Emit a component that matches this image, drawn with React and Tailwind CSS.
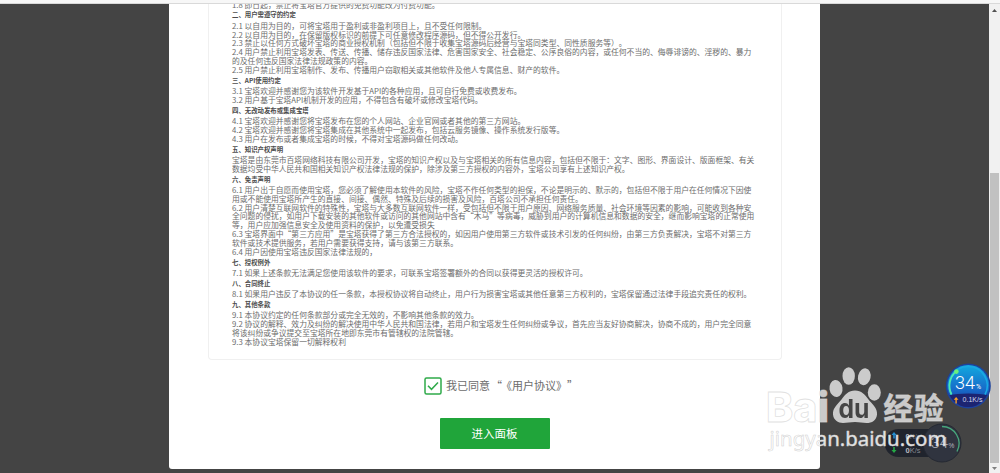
const sections = [
  {
    title: '二、用户需遵守的约定',
    lines: [
      '2.1 以自用为目的，可将宝塔用于盈利或非盈利项目上，且不受任何限制。',
      '2.2 以自用为目的，在保留版权标识的前提下可任意修改程序源码，但不得公开发行。',
      '2.3 禁止以任何方式破坏宝塔的商业授权机制（包括但不限于收集宝塔源码后经营与宝塔同类型、同性质服务等）。',
      '2.4 用户禁止利用宝塔发表、传送、传播、储存违反国家法律、危害国家安全、社会稳定、公序良俗的内容，或任何不当的、侮辱诽谤的、淫秽的、暴力',
      '的及任何违反国家法律法规政策的内容。',
      '2.5 用户禁止利用宝塔制作、发布、传播用户窃取相关或其他软件及他人专属信息、财产的软件。',
    ],
  },
  {
    title: '三、API使用约定',
    lines: [
      '3.1 宝塔欢迎并感谢您为该软件开发基于API的各种应用，且可自行免费或收费发布。',
      '3.2 用户基于宝塔API机制开发的应用，不得包含有破坏或修改宝塔代码。',
    ],
  },
  {
    title: '四、无改动发布或集成宝塔',
    lines: [
      '4.1 宝塔欢迎并感谢您将宝塔发布在您的个人网站、企业官网或者其他的第三方网站。',
      '4.2 宝塔欢迎并感谢您将宝塔集成在其他系统中一起发布，包括云服务镜像、操作系统发行版等。',
      '4.3 用户在发布或者集成宝塔的时候，不得对宝塔源码做任何改动。',
    ],
  },
  {
    title: '五、知识产权声明',
    lines: [
      '宝塔是由东莞市百塔网络科技有限公司开发，宝塔的知识产权以及与宝塔相关的所有信息内容，包括但不限于：文字、图形、界面设计、版面框架、有关',
      '数据均受中华人民共和国相关知识产权法律法规的保护，除涉及第三方授权的内容外，宝塔公司享有上述知识产权。',
    ],
  },
  {
    title: '六、免责声明',
    lines: [
      '6.1 用户出于自愿而使用宝塔，您必须了解使用本软件的风险，宝塔不作任何类型的担保，不论是明示的、默示的，包括但不限于用户在任何情况下因使',
      '用或不能使用宝塔所产生的直接、间接、偶然、特殊及后续的损害及风险，百塔公司不承担任何责任。',
      '6.2 用户清楚互联网软件的特殊性，宝塔与大多数互联网软件一样，受包括但不限于用户原因、网络服务质量、社会环境等因素的影响，可能收到各种安',
      '全问题的侵扰，如用户下载安装的其他软件或访问的其他网站中含有“木马”等病毒，威胁到用户的计算机信息和数据的安全，继而影响宝塔的正常使用',
      '等，用户应加强信息安全及使用资料的保护，以免遭受损失',
      '6.3 宝塔界面中“第三方应用”是宝塔获得了第三方合法授权的，如因用户使用第三方软件或技术引发的任何纠纷，由第三方负责解决，宝塔不对第三方',
      '软件或技术提供服务，若用户需要获得支持，请与该第三方联系。',
      '6.4 用户因使用宝塔违反国家法律法规的，',
    ],
  },
  {
    title: '七、授权例外',
    lines: ['7.1 如果上述条款无法满足您使用该软件的要求，可联系宝塔签署额外的合同以获得更灵活的授权许可。'],
  },
  {
    title: '八、合同终止',
    lines: ['8.1 如果用户违反了本协议的任一条款，本授权协议将自动终止，用户行为损害宝塔或其他任意第三方权利的，宝塔保留通过法律手段追究责任的权利。'],
  },
  {
    title: '九、其他条款',
    lines: [
      '9.1 本协议约定的任何条款部分或完全无效的，不影响其他条款的效力。',
      '9.2 协议的解释、效力及纠纷的解决使用中华人民共和国法律，若用户和宝塔发生任何纠纷或争议，首先应当友好协商解决，协商不成的，用户完全同意',
      '将该纠纷或争议提交至宝塔所在地即东莞市有管辖权的法院管辖。',
      '9.3 本协议宝塔保留一切解释权利',
    ],
  },
];

const Agreement = () => (
  <div className="ml-[39px] mr-[38px] h-[356px] overflow-hidden rounded-b-[4px] border border-t-0 border-[#f0f0f0] pl-[23px] text-[7.8px] leading-[8.85px] text-[#6c6c6c]">
    <p className="-mt-[3.4px] whitespace-nowrap">1.8 即日起，禁止将宝塔官方提供的免费功能改为付费功能。</p>
    {sections.map((section) => (
      <section key={section.title}>
        <h3 className="h-[12.3px] whitespace-nowrap text-[6.4px] font-bold leading-[12.3px] text-[#4c4c4c]">
          {section.title}
        </h3>
        {section.lines.map((line) => (
          <p key={line} className="whitespace-nowrap">{line}</p>
        ))}
      </section>
    ))}
  </div>
);

const Scrollbar = () => (
  <div className="flex w-[11px] flex-col items-center bg-[#f1f1f1]">
    <svg className="mt-1 h-[5px] w-[5px]" viewBox="0 0 5 5">
      <path d="M0 4 2.5 1 5 4Z" fill="#505050" />
    </svg>
    <div className="mt-[160px] h-[290px] w-[9px] bg-[#c1c1c1]" />
    <svg className="mt-[3px] h-[5px] w-[5px]" viewBox="0 0 5 5">
      <path d="M0 1 2.5 4 5 1Z" fill="#808080" />
    </svg>
  </div>
);

const SpeedBall = () => (
  <svg className="absolute left-[943px] top-[360px] h-[52px] w-[52px]" viewBox="0 0 52 52">
    <defs>
      <linearGradient id="ball" x1="0" y1="0" x2="0" y2="1">
        <stop offset="0" stopColor="#12a9df" />
        <stop offset=".6" stopColor="#1769c8" />
        <stop offset="1" stopColor="#1d2f91" />
      </linearGradient>
      <clipPath id="ballClip">
        <circle cx="25.3" cy="26" r="21" />
      </clipPath>
    </defs>
    <circle cx="25.3" cy="26" r="22.5" fill="#1c429c" />
    <circle cx="25.3" cy="26" r="21" fill="url(#ball)" />
    <path d="M0 36Q25 31 52 36V52H0Z" fill="#1c2471" clipPath="url(#ballClip)" />
    <path d="M8.5 34.5A19 19 0 1 1 42 34.5" fill="none" stroke="#19a9e4" strokeWidth="1.6" />
    <path d="M8.5 34.5A19 19 0 0 1 13.2 11.4" fill="none" stroke="#4fe8b0" strokeWidth="1.8" />
    <circle cx="13.4" cy="11.6" r="2.3" fill="#6cf07a" />
    <text x="12" y="29.3" fontSize="17.5" fill="#fff" fontFamily="Roboto, sans-serif" fontWeight="300" textLength="20" lengthAdjust="spacingAndGlyphs">34</text>
    <text x="33" y="29" fontSize="7" fill="#fff" fontFamily="Roboto, sans-serif">%</text>
    <path d="M12.4 43.5v-3.7h-1.7l2.4-2.8 2.4 2.8h-1.7v3.7Z" fill="#f7a12b" />
    <text x="19.5" y="42" fontSize="7" fill="#d3d8ee" fontFamily="'Liberation Sans', sans-serif" textLength="20" lengthAdjust="spacingAndGlyphs">0.1K/s</text>
  </svg>
);

const SpeedPill = () => (
  <svg className="absolute left-[880px] top-[420px] h-[46px] w-[86px]" viewBox="0 0 86 46">
    <rect x="4.5" y="9" width="70" height="28" rx="14" fill="#20242d" />
    <circle cx="62" cy="23" r="19" fill="#30343f" stroke="#242832" />
    <path d="M62 6.5A17 17 0 0 1 77 31.5" fill="none" stroke="#47a77c" strokeWidth="1.3" />
    <path d="M13.2 18.5v-3.5h-1.7l2.5-3 2.5 3h-1.7v3.5Z" fill="#258cce" />
    <path d="M13.2 27v3h-1.7l2.5 3 2.5-3h-1.7v-3Z" fill="#26a945" />
    <g fontFamily="'Liberation Sans', sans-serif" fill="#b8bac0">
      <text x="25.5" y="18.5" fontSize="7.5" fontWeight="700">0<tspan fill="#666c76" fontWeight="400">K/s</tspan></text>
      <text x="25.5" y="33" fontSize="7.5" fontWeight="700">0<tspan fill="#858991" fontWeight="400">K/s</tspan></text>
      <text x="51" y="28.3" fontSize="15.5" fontFamily="Roboto, sans-serif" fontWeight="300">34</text>
      <text x="68.5" y="28" fontSize="6.5">%</text>
    </g>
  </svg>
);

const BaiduMark = () => (
  <svg className="absolute left-[760px] top-[360px] h-[96px] w-[195px]" viewBox="760 360 195 96">
    <defs>
      <mask id="pawMask">
        <rect x="760" y="360" width="195" height="96" fill="#fff" />
        <text x="838.5" y="418" fontSize="26" fontWeight="700" fontFamily="Inter, sans-serif" textLength="31" lengthAdjust="spacingAndGlyphs" fill="#000">du</text>
      </mask>
    </defs>
    <g fill="#fff" fillOpacity=".72" stroke="#d4d4d4" strokeWidth=".8" strokeOpacity=".7">
      <text x="766" y="422" fontSize="41" fontWeight="800" fontFamily="Inter, sans-serif" textLength="63" lengthAdjust="spacingAndGlyphs">Bai</text>
      <text x="883.5" y="418.5" fontSize="29.5" fontWeight="700" fontFamily="'Noto Sans CJK SC', sans-serif" textLength="60">经验</text>
    </g>
    <g fill="#fff" fillOpacity=".72" mask="url(#pawMask)">
      <ellipse cx="836" cy="388.5" rx="6.5" ry="8.5" transform="rotate(-8 836 388.5)" />
      <ellipse cx="848.7" cy="376" rx="6.2" ry="8.8" />
      <ellipse cx="864.3" cy="376.8" rx="6.3" ry="8.5" transform="rotate(12 864.3 376.8)" />
      <ellipse cx="874.3" cy="392.5" rx="6.5" ry="8.3" />
      <path d="M855 390.5c6.5 0 10 4 13.5 9 3.5 4.5 9 8.5 8.5 15-.5 6-5 8.500-10.500 8.500-4 0-7-1-11.500-1s-8 1-12 1c-5 0-9.500-3-10-8.500-.5-6.500 4.500-10 8.500-15 3.500-5 7-9 13.500-9Z" />
    </g>
    <text x="769.5" y="445.8" fontSize="19.5" fontFamily="'Noto Sans', sans-serif" textLength="177" lengthAdjust="spacingAndGlyphs" fill="#fff" fillOpacity=".88" stroke="#d0d0d0" strokeWidth=".5">
      jingyan.baidu.com
    </text>
  </svg>
);

const App = () => {
  return (
    <div className="relative flex h-[473px] w-[1000px] flex-col overflow-hidden bg-[#444] font-['Noto_Sans_CJK_SC',sans-serif] [text-spacing-trim:space-all]">
      <div className="h-[4px] shrink-0 border-b border-[#d9d9d9] bg-[#f7f7f7]" />
      <div className="flex min-h-0 flex-1">
        <div className="flex flex-1 justify-center">
          <main className="flex h-[465px] w-[651px] flex-col rounded-b-[3px] bg-white">
            <Agreement />
            <label className="mt-[17px] flex h-[18px] items-center pl-[255px] text-[11px] text-[#6c6c6c]">
              <svg className="mr-[4px] h-[18px] w-[18px] shrink-0" viewBox="0 0 18 18" fill="none" stroke="#2faa4a">
                <rect x="1" y="1" width="16" height="16" rx="1.5" strokeWidth="1.5" />
                <path d="m4 8.7 3.5 3.6L14 5.5" strokeWidth="1.5" />
              </svg>
              <span className="-mt-[2px] whitespace-nowrap">我已同意<span className="-mr-[1px] ml-[1px]">“</span>《用户协议》”</span>
            </label>
            <button className="mx-auto mt-[23px] h-[31px] w-[110px] rounded-[1px] bg-[#20a53a] text-[11.5px] text-white">
              进入面板
            </button>
          </main>
        </div>
        <Scrollbar />
      </div>
      <SpeedBall />
      <SpeedPill />
      <BaiduMark />
    </div>
  );
};

export default App;
